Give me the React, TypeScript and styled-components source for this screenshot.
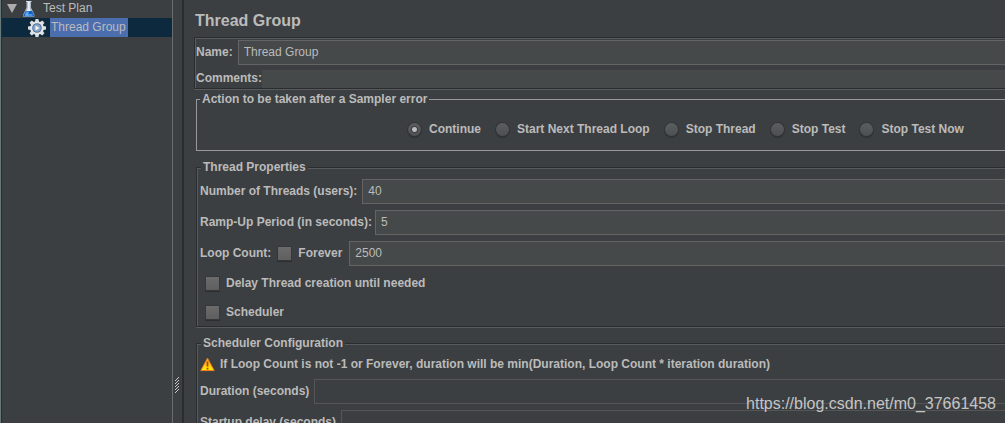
import React from 'react';
import styled, { createGlobalStyle, css } from 'styled-components';

const color = {
  bg: '#3c3f41',
  field: '#45494a',
  fieldLine: '#646464',
  mutedLine: '#555555',
  text: '#bbbbbb',
  dark: '#2a2c2d',
  light: '#585b5d',
};

const GlobalStyle = createGlobalStyle`
  * { box-sizing: border-box; }
  body {
    margin: 0;
    background: ${color.bg};
    color: ${color.text};
    font: 12px/16px "Liberation Sans", Arial, sans-serif;
    overflow: hidden;
  }
`;

const etched = css`
  border: 1px solid ${color.dark};
  border-right: 0;
  box-shadow: inset 1px 1px ${color.light}, 0 1px ${color.light};
`;

const Window = styled.div`
  display: flex;
  height: 100vh;
  overflow: hidden;
  position: relative;
`;

const Sidebar = styled.nav`
  flex: 0 0 172px;
  padding-left: 1px;
  border-left: 1px solid #66787a;
  box-shadow: inset 1px 0 ${color.dark};
`;

const TreeItem = styled.button<{ $level: number; $selected?: boolean }>`
  display: flex;
  align-items: center;
  gap: 4px;
  width: 100%;
  height: 19px;
  margin: 0;
  padding: 0 0 0 ${(p) => (p.$level ? 26 : 5)}px;
  border: 0;
  background: ${(p) => (p.$selected ? '#0d293e' : 'transparent')};
  color: inherit;
  font: inherit;
`;

const TreeLabel = styled.span<{ $selected?: boolean }>`
  height: 19px;
  padding: 0 2px 0 1px;
  line-height: 18px;
  background: ${(p) => (p.$selected ? '#4b6eaf' : 'transparent')};
`;

const Tree = styled.div`
  margin-top: -1px;
`;

const Divider = styled.div`
  flex: 0 0 12px;
  display: flex;
  justify-content: center;
  align-items: flex-end;
  padding-bottom: 30px;
  border-left: 1px solid #6b6e70;
  border-right: 2px solid ${color.dark};
`;

const Main = styled.main`
  flex: 1;
  min-width: 0;
  padding: 11px 0 0 10px;
`;

const Title = styled.h1`
  margin: 0 0 7px;
  padding-left: 1px;
  font-size: 16px;
  line-height: 19px;
`;

const Identity = styled.div`
  ${etched}
  display: flex;
  flex-direction: column;
  gap: 5px;
  padding: 2px 0 0 1px;
`;

const Group = styled.fieldset`
  ${etched}
  min-width: 0;
  margin: 0 0 9px 2px;
  padding: 4px 0 2px 3px;
`;

const PlainGroup = styled.fieldset`
  min-width: 0;
  margin: 3px 0 9px 2px;
  padding: 6px 0 0 2px;
  border: 1px solid #999999;
  border-right: 0;
`;

const Legend = styled.legend`
  margin-left: 1px;
  padding: 0 2px;
  background: ${color.bg};
  font-weight: bold;
  line-height: 15px;
`;

const Rows = styled.div`
  display: flex;
  flex-direction: column;
  gap: 6px;
`;

const Row = styled.div<{ $height?: number; $gap?: number; $indent?: number }>`
  display: flex;
  align-items: center;
  gap: ${(p) => p.$gap ?? 5}px;
  height: ${(p) => p.$height ?? 25}px;
  padding-left: ${(p) => p.$indent ?? 0}px;
`;

const Label = styled.label`
  padding-bottom: 2px;
  font-weight: bold;
  white-space: nowrap;
`;

const Note = styled.p`
  margin: 0;
  font-weight: bold;
  white-space: nowrap;
`;

const TextInput = styled.input<{ $kind?: 'flat' | 'disabled' }>`
  flex: 1;
  min-width: 0;
  align-self: stretch;
  padding: 0 5px 2px;
  border: ${(p) =>
    p.$kind === 'flat' ? '0' : `1px solid ${p.$kind === 'disabled' ? color.mutedLine : color.fieldLine}`};
  border-right: 0;
  border-radius: 0;
  outline: 0;
  background: ${(p) => (p.$kind === 'disabled' ? color.bg : color.field)};
  color: ${color.text};
  font: inherit;
`;

const Checkbox = styled.input.attrs({ type: 'checkbox' })`
  appearance: none;
  flex: none;
  width: 13px;
  height: 13px;
  margin: 0;
  background: linear-gradient(#6b6b6b, #5f5f5f);
  box-shadow: 0 0 0 1px #35383a, 0 1px 0 1px #2c2e2f;
`;

const Radios = styled.div`
  display: flex;
  gap: 15px;
  height: 37px;
  padding: 0 0 4px 209px;
  align-items: center;
`;

const Choice = styled.div`
  display: flex;
  align-items: center;
  gap: 8px;
`;

const Radio = styled.input.attrs({ type: 'radio' })`
  appearance: none;
  flex: none;
  width: 13px;
  height: 13px;
  margin: 0;
  border-radius: 50%;
  background: linear-gradient(#5b5e60, #4d5052);
  box-shadow: 0 0 0 1px #343638, 0 1px 0 1px #2e3031;
  &:checked {
    background: radial-gradient(circle, #bbbbbb 0 2px, #3c3e3f 3px, transparent 4px),
      linear-gradient(#5b5e60, #4d5052);
  }
`;

const Watermark = styled.a`
  position: absolute;
  right: 9px;
  bottom: 9px;
  color: #c4c5c6;
  font-size: 16px;
  line-height: 20px;
  text-decoration: none;
`;

const FlaskIcon = () => (
  <svg width="17" height="18" viewBox="0 0 17 18">
    <path d="M5.5 1.500h4.500v6l3.500 7.500q.6 2-1.300 2H3.300q-1.900 0-1.300-2l3.500-7.500z" fill="#a9b6c1" />
    <path d="M6.800 2h2v6.500l1.200 3H5.500l1.300-3z" fill="#e8eef3" />
    <path d="M4.600 11h6.400l2 4.300q.4 1.200-.9 1.200H3.500q-1.300 0-.9-1.200z" fill="#1260c4" />
    <path d="M5.200 11.500h2.600l-.6 4H3.800z" fill="#58a6ee" />
    <path d="M4.500 15h7" stroke="#8cc6f5" />
    <path d="M5 1.500h5.500" stroke="#d5dde3" />
  </svg>
);

const GearIcon = () => (
  <svg width="18" height="18" viewBox="0 0 18 18">
    {[0, 45, 90, 135].map((angle) => (
      <path key={angle} d="M7.500 0h3l.8 4v10l-.8 4h-3l-.8-4V4z" fill="#dcdee0" transform={`rotate(${angle} 9 9)`} />
    ))}
    <circle cx="9" cy="9" r="6.800" fill="#e4e6e8" />
    <circle cx="9" cy="9" r="4.800" fill="#4f709a" />
    <circle cx="9" cy="9" r="3.800" fill="#86a5c8" />
    <path d="M7.500 6.500l4 2.500-4 2.500z" fill="#f4f7fa" />
  </svg>
);

const WarningIcon = () => (
  <svg width="15" height="15" viewBox="0 0 15 15">
    <defs>
      <linearGradient id="warn" x1="0" y1="0" x2="0" y2="1">
        <stop offset="0" stopColor="#f7a51c" />
        <stop offset="1" stopColor="#ffee00" />
      </linearGradient>
    </defs>
    <path d="M7.500 1.200L14.200 13.600H.8z" fill="url(#warn)" stroke="#ee7d1e" strokeLinejoin="round" />
    <path d="M7.500 4.500v5M7.500 10.800v1.700" stroke="#c03a10" strokeWidth="1.800" />
  </svg>
);

const ExpandIcon = () => (
  <svg width="10" height="9" viewBox="0 0 10 9">
    <path d="M0 0h10L5 9z" fill="#adadad" />
  </svg>
);

const GripIcon = () => (
  <svg width="5" height="16" viewBox="0 0 5 16">
    {[0, 3, 6, 9, 12].map((y) => (
      <path key={y} d={`M0 ${y + 3.5}h1M1 ${y + 2.5}h1M2 ${y + 1.5}h1M3 ${y + 0.5}h1`} stroke="#c8c8c8" />
    ))}
  </svg>
);

const actions = ['Continue', 'Start Next Thread Loop', 'Stop Thread', 'Stop Test', 'Stop Test Now'];

export default function App() {
  return (
    <Window>
      <GlobalStyle />
      <Sidebar>
        <Tree>
          <TreeItem $level={0}>
            <ExpandIcon />
            <FlaskIcon />
            <TreeLabel>Test Plan</TreeLabel>
          </TreeItem>
          <TreeItem $level={1} $selected>
            <GearIcon />
            <TreeLabel $selected>Thread Group</TreeLabel>
          </TreeItem>
        </Tree>
      </Sidebar>
      <Divider>
        <GripIcon />
      </Divider>
      <Main>
        <Title>Thread Group</Title>
        <Identity>
          <Row>
            <Label htmlFor="name">Name:</Label>
            <TextInput id="name" defaultValue="Thread Group" />
          </Row>
          <Row $height={18} $gap={0}>
            <Label htmlFor="comments">Comments:</Label>
            <TextInput id="comments" $kind="flat" />
          </Row>
        </Identity>
        <PlainGroup>
          <Legend>Action to be taken after a Sampler error</Legend>
          <Radios>
            {actions.map((action, i) => (
              <Choice key={action}>
                <Radio id={`action-${i}`} name="action" defaultChecked={i === 0} />
                <Label htmlFor={`action-${i}`}>{action}</Label>
              </Choice>
            ))}
          </Radios>
        </PlainGroup>
        <Group>
          <Legend>Thread Properties</Legend>
          <Rows>
            <Row>
              <Label htmlFor="threads">Number of Threads (users):</Label>
              <TextInput id="threads" defaultValue="40" />
            </Row>
            <Row $gap={3}>
              <Label htmlFor="ramp">Ramp-Up Period (in seconds):</Label>
              <TextInput id="ramp" defaultValue="5" />
            </Row>
            <Row $gap={7}>
              <Label htmlFor="loops">Loop Count:</Label>
              <Row $gap={7}>
                <Checkbox id="forever" />
                <Label htmlFor="forever">Forever</Label>
              </Row>
              <TextInput id="loops" defaultValue="2500" />
            </Row>
            <Row $height={23} $gap={7} $indent={6}>
              <Checkbox id="delay" />
              <Label htmlFor="delay">Delay Thread creation until needed</Label>
            </Row>
            <Row $height={23} $gap={7} $indent={6}>
              <Checkbox id="scheduler" />
              <Label htmlFor="scheduler">Scheduler</Label>
            </Row>
          </Rows>
        </Group>
        <Group>
          <Legend>Scheduler Configuration</Legend>
          <Rows>
            <Row $height={18}>
              <WarningIcon />
              <Note>If Loop Count is not -1 or Forever, duration will be min(Duration, Loop Count * iteration duration)</Note>
            </Row>
            <Row>
              <Label htmlFor="duration">Duration (seconds)</Label>
              <TextInput id="duration" $kind="disabled" disabled />
            </Row>
            <Row>
              <Label htmlFor="startup">Startup delay (seconds)</Label>
              <TextInput id="startup" $kind="disabled" disabled />
            </Row>
          </Rows>
        </Group>
      </Main>
      <Watermark href="https://blog.csdn.net/m0_37661458">https://blog.csdn.net/m0_37661458</Watermark>
    </Window>
  );
}
